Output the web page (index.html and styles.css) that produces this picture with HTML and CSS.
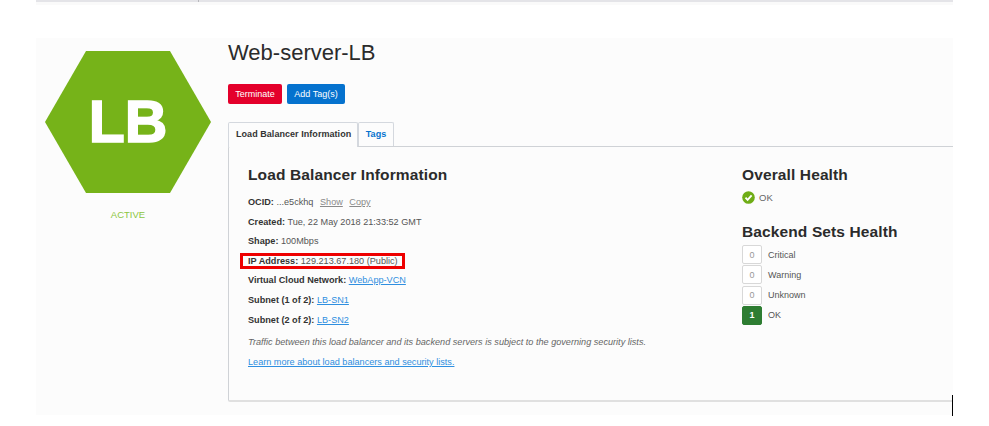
FILE: index.html
```html
<!DOCTYPE html>
<html lang="en">
<head>
<meta charset="utf-8">
<title>Web-server-LB</title>
<link rel="stylesheet" href="styles.css">
</head>
<body>
<div class="page">
  <div class="topbar"><span class="topbar-left"></span><span class="topbar-right"></span></div>
  <main class="panel">
    <aside class="side">
      <div class="hex">
        <svg class="hex-shape" width="166" height="142" viewBox="0 0 166 142" aria-hidden="true"><polygon points="41,0 125,0 166,71 125,142 41,142 0,71" fill="#76b319"/></svg>
        <span class="hex-text">LB</span>
      </div>
      <div class="status">ACTIVE</div>
    </aside>
    <section class="main">
      <h1 class="title">Web-server-LB</h1>
      <div class="actions">
        <button class="btn btn-red">Terminate</button>
        <button class="btn btn-blue">Add Tag(s)</button>
      </div>
      <div class="tabs">
        <div class="tab tab-active">Load Balancer Information</div>
        <div class="tab tab-link">Tags</div>
      </div>
      <div class="tabbody">
        <div class="info">
          <h2 class="h2">Load Balancer Information</h2>
          <p class="row"><b>OCID:</b> ...e5ckhq <a class="muted first">Show</a> <a class="muted">Copy</a></p>
          <p class="row"><b>Created:</b> Tue, 22 May 2018 21:33:52 GMT</p>
          <p class="row"><b>Shape:</b> 100Mbps</p>
          <p class="row"><span class="hl"><b>IP Address:</b> 129.213.67.180 (Public)</span></p>
          <p class="row"><b>Virtual Cloud Network:</b> <a class="link">WebApp-VCN</a></p>
          <p class="row"><b>Subnet (1 of 2):</b> <a class="link">LB-SN1</a></p>
          <p class="row"><b>Subnet (2 of 2):</b> <a class="link">LB-SN2</a></p>
          <p class="row note">Traffic between this load balancer and its backend servers is subject to the governing security lists.</p>
          <p class="row learn"><a class="link">Learn more about load balancers and security lists.</a></p>
        </div>
        <div class="health">
          <h2 class="h2">Overall Health</h2>
          <div class="overall">
            <svg width="13" height="13" viewBox="0 0 13 13" aria-hidden="true"><circle cx="6.5" cy="6.5" r="6.3" fill="#6fad16"/><path d="M3.5 6.7 5.6 8.8 9.6 4.4" fill="none" stroke="#fff" stroke-width="1.9"/></svg>
            <span>OK</span>
          </div>
          <h2 class="h2 h2-sets">Backend Sets Health</h2>
          <div class="counts">
            <div class="count"><span class="box">0</span>Critical</div>
            <div class="count"><span class="box">0</span>Warning</div>
            <div class="count"><span class="box">0</span>Unknown</div>
            <div class="count"><span class="box box-ok">1</span>OK</div>
          </div>
        </div>
      </div>
    </section>
    <span class="tick"></span>
  </main>
</div>
</body>
</html>
```
FILE: styles.css
```css
* { box-sizing: border-box; }
html, body { margin: 0; padding: 0; background: #fff; }
body { font-family: "Liberation Sans", Arial, sans-serif; color: #333; height: 426px; overflow: hidden; }
.page { width: 953px; padding-left: 36px; }
.topbar { display: flex; height: 5px; background: #fafafa; }
.topbar-left { width: 163px; height: 2px; background: #e4e4e8; border-right: 1px solid #b9b9bd; }
.topbar-right { flex: 1; height: 2px; background: #e4e4e8; }
.panel { position: relative; display: flex; margin-top: 33px; height: 377px; background: #fcfcfc; }
.side { width: 192px; padding: 13px 0 0 9px; }
.hex { position: relative; width: 166px; height: 142px; }
.hex-shape { display: block; }
.hex-text { position: absolute; inset: 0; display: flex; align-items: center; justify-content: center; color: #fff; font-size: 59px; font-weight: 700; -webkit-text-stroke: 1.6px #fff; }
.status { width: 166px; margin-top: 16px; text-align: center; font-size: 9.5px; color: #8cc63f; }
.main { flex: 1; min-width: 0; }
.title { margin: 0; padding-top: 2px; font-size: 22px; line-height: 26px; font-weight: 400; color: #2b2b2b; }
.actions { display: flex; gap: 5px; margin-top: 18px; }
.btn { height: 20px; padding: 0; border: 0; border-radius: 2px; color: #fff; font: 9px "Liberation Sans", Arial, sans-serif; }
.btn-red { width: 54px; background: #e4002b; }
.btn-blue { width: 58px; background: #0572ce; }
.tabs { display: flex; margin-top: 18px; height: 24px; }
.tab { border: 1px solid #d4d8de; border-bottom: 0; border-radius: 2px 2px 0 0; font-size: 9px; font-weight: 700; line-height: 22px; letter-spacing: .05px; }
.tab-active { width: 130px; height: 25px; padding-left: 7px; background: #fcfcfc; color: #333; position: relative; z-index: 1; }
.tab-link { width: 36px; text-align: center; color: #0572ce; }
.tabbody { display: flex; height: 256px; border: 1px solid #cfd2d6; border-right: 0; border-bottom: 2px solid #e0e0e0; border-radius: 2px 0 0 2px; }
.info { width: 513px; padding: 18px 0 0 19px; }
.h2 { margin: 0; font-size: 15.5px; line-height: 20px; font-weight: 700; color: #2b2b2b; letter-spacing: .12px; }
.row { margin: 0; font-size: 9.15px; line-height: 12px; margin-top: 7.6px; color: #555; white-space: nowrap; }
.h2 + .row { margin-top: 11px; }
.row b { color: #333; }
.hl { display: inline-block; position: relative; }
.hl::after { content: ""; position: absolute; left: -8px; right: -7px; top: -2px; bottom: -2px; border: 3px solid #ee0000; }
.muted { color: #8a8a8a; text-decoration: underline; }
.first { margin-left: 4px; }
.muted + .muted { margin-left: 4px; }
.link { color: #2f8fe0; text-decoration: underline; }
.row.note { margin-top: 10.5px; font-style: italic; color: #666; }
.row.learn { margin-top: 8px; }
.health { flex: 1; padding-top: 18px; }
.overall { display: flex; align-items: center; gap: 4px; margin-top: 6px; font-size: 9.5px; color: #666; }
.h2-sets { margin-top: 18px; }
.counts { display: flex; flex-direction: column; gap: 1.3px; margin-top: 3px; }
.count { display: flex; align-items: center; gap: 6px; font-size: 9px; color: #555; }
.box { width: 20px; height: 19px; display: flex; align-items: center; justify-content: center; border: 1px solid #d8d8d8; border-radius: 2px; background: #fff; color: #999; }
.box-ok { background: #2e7d32; border-color: #2e7d32; color: #fff; font-weight: 700; }
.tick { position: absolute; left: 916px; top: 357px; width: 1px; height: 21px; background: #000; }
```
